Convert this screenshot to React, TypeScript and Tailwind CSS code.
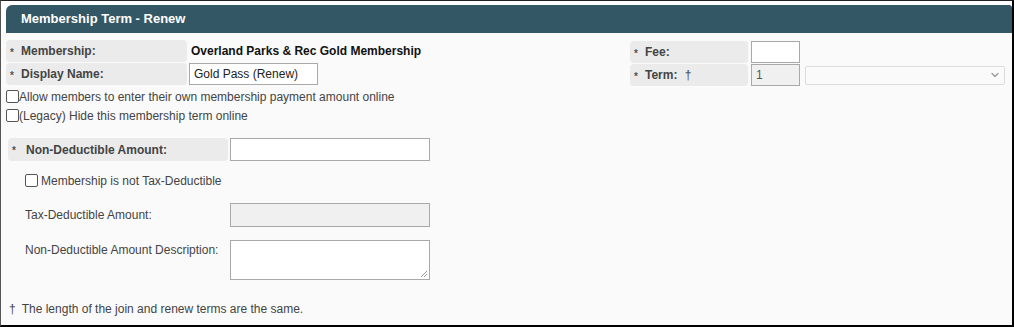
import { ChevronDown } from 'lucide-react';

const font = { fontFamily: '"Liberation Sans", Arial, sans-serif' };

function Req() {
  return <span className="w-[11px] shrink-0 text-[10px] leading-none text-[#555] pt-[3px]">*</span>;
}

function Label({ children, className = '' }: { children: React.ReactNode; className?: string }) {
  return (
    <div className={`flex items-center h-[22px] rounded-[4px] bg-[#ebebeb] pl-[4px] font-bold text-[#444] ${className}`}>
      <Req />
      <span>{children}</span>
    </div>
  );
}

function Box({ className = '', children }: { className?: string; children?: React.ReactNode }) {
  return (
    <div className={`flex items-center border border-[#a9a9a9] px-[4px] text-[12px] text-[#222] ${className}`}>
      {children}
    </div>
  );
}

function Check({ className = '' }: { className?: string }) {
  return <span className={`inline-block w-[13px] h-[13px] shrink-0 rounded-[2px] border border-[#555] bg-white ${className}`} />;
}

export default function App() {
  return (
    <div
      className="w-[1014px] h-[327px] border-t border-l border-t-[#222] border-l-[#555] border-r-2 border-r-black border-b-2 border-b-black bg-[#fafafa] text-[12px] overflow-hidden"
      style={font}
    >
      <div className="bg-white pt-[4px] pl-[5px]">
        <div className="h-[28px] rounded-tl-[6px] rounded-tr-[3px] bg-[#345766] flex items-center pl-[15px] text-white font-bold text-[13px]">
          Membership Term - Renew
        </div>
      </div>

      <div className="flex pl-[5px] pt-[7px]">
        <div className="w-[624px]">
          <div className="flex items-center gap-[2px]">
            <Label className="w-[181px]">Membership:</Label>
            <span className="font-bold text-[#111] pl-[2px]">Overland Parks &amp; Rec Gold Membership</span>
          </div>
          <div className="flex items-center gap-[2px] mt-[1px]">
            <Label className="w-[181px]">Display Name:</Label>
            <Box className="w-[129px] h-[22px] bg-white">Gold Pass (Renew)</Box>
          </div>
          <div className="flex items-center h-[19px] mt-[2px] text-[#444]">
            <Check />
            <span>Allow members to enter their own membership payment amount online</span>
          </div>
          <div className="flex items-center h-[19px] text-[#444]">
            <Check />
            <span>(Legacy) Hide this membership term online</span>
          </div>
        </div>

        <div>
          <div className="flex items-center gap-[3px] pt-[1px]">
            <Label className="w-[118px]">Fee:</Label>
            <Box className="w-[49px] h-[22px] bg-white" />
          </div>
          <div className="flex items-center gap-[3px] mt-[1px]">
            <Label className="w-[118px]">
              Term: <span className="font-normal pl-[4px]">†</span>
            </Label>
            <Box className="w-[49px] h-[22px] bg-[#f0f0f0] text-[#555]">1</Box>
            <div className="ml-[2px] w-[200px] h-[19px] flex items-center justify-end rounded-[2px] border border-[#dcdcdc] bg-[#fafafa] pr-[3px]">
              <ChevronDown className="w-[12px] h-[12px] text-[#999]" strokeWidth={2.5} />
            </div>
          </div>
        </div>
      </div>

      <div className="pl-[7px] pt-[13px]">
        <div className="flex items-center gap-[2px]">
          <div className="flex items-center w-[220px] h-[23px] rounded-[4px] bg-[#ebebeb] pl-[4px] font-bold text-[#444]">
            <span className="w-[14px] shrink-0 text-[10px] leading-none text-[#555] pt-[3px]">*</span>
            <span>Non-Deductible Amount:</span>
          </div>
          <Box className="w-[200px] h-[23px] bg-white" />
        </div>

        <div className="flex items-center pl-[17px] mt-[11px] h-[17px] text-[#444] gap-[3px]">
          <Check />
          <span>Membership is not Tax-Deductible</span>
        </div>

        <div className="flex items-center mt-[14px]">
          <span className="w-[222px] pl-[17px] text-[#444]">Tax-Deductible Amount:</span>
          <Box className="w-[200px] h-[24px] bg-[#f0f0f0]" />
        </div>

        <div className="flex items-start mt-[13px]">
          <span className="w-[222px] pl-[17px] text-[#444] pt-[1px]">Non-Deductible Amount Description:</span>
          <div className="relative w-[200px] h-[40px] border border-[#a9a9a9] bg-white">
            <svg className="absolute right-[1px] bottom-[1px]" width="8" height="8" viewBox="0 0 8 8">
              <path d="M7 1L1 7M7 4L4 7" stroke="#999" strokeWidth="1" />
            </svg>
          </div>
        </div>

        <div className="mt-[20px] pl-[1px] text-[#444]">
          <span className="pr-[6px]">†</span>The length of the join and renew terms are the same.
        </div>
      </div>
    </div>
  );
}
